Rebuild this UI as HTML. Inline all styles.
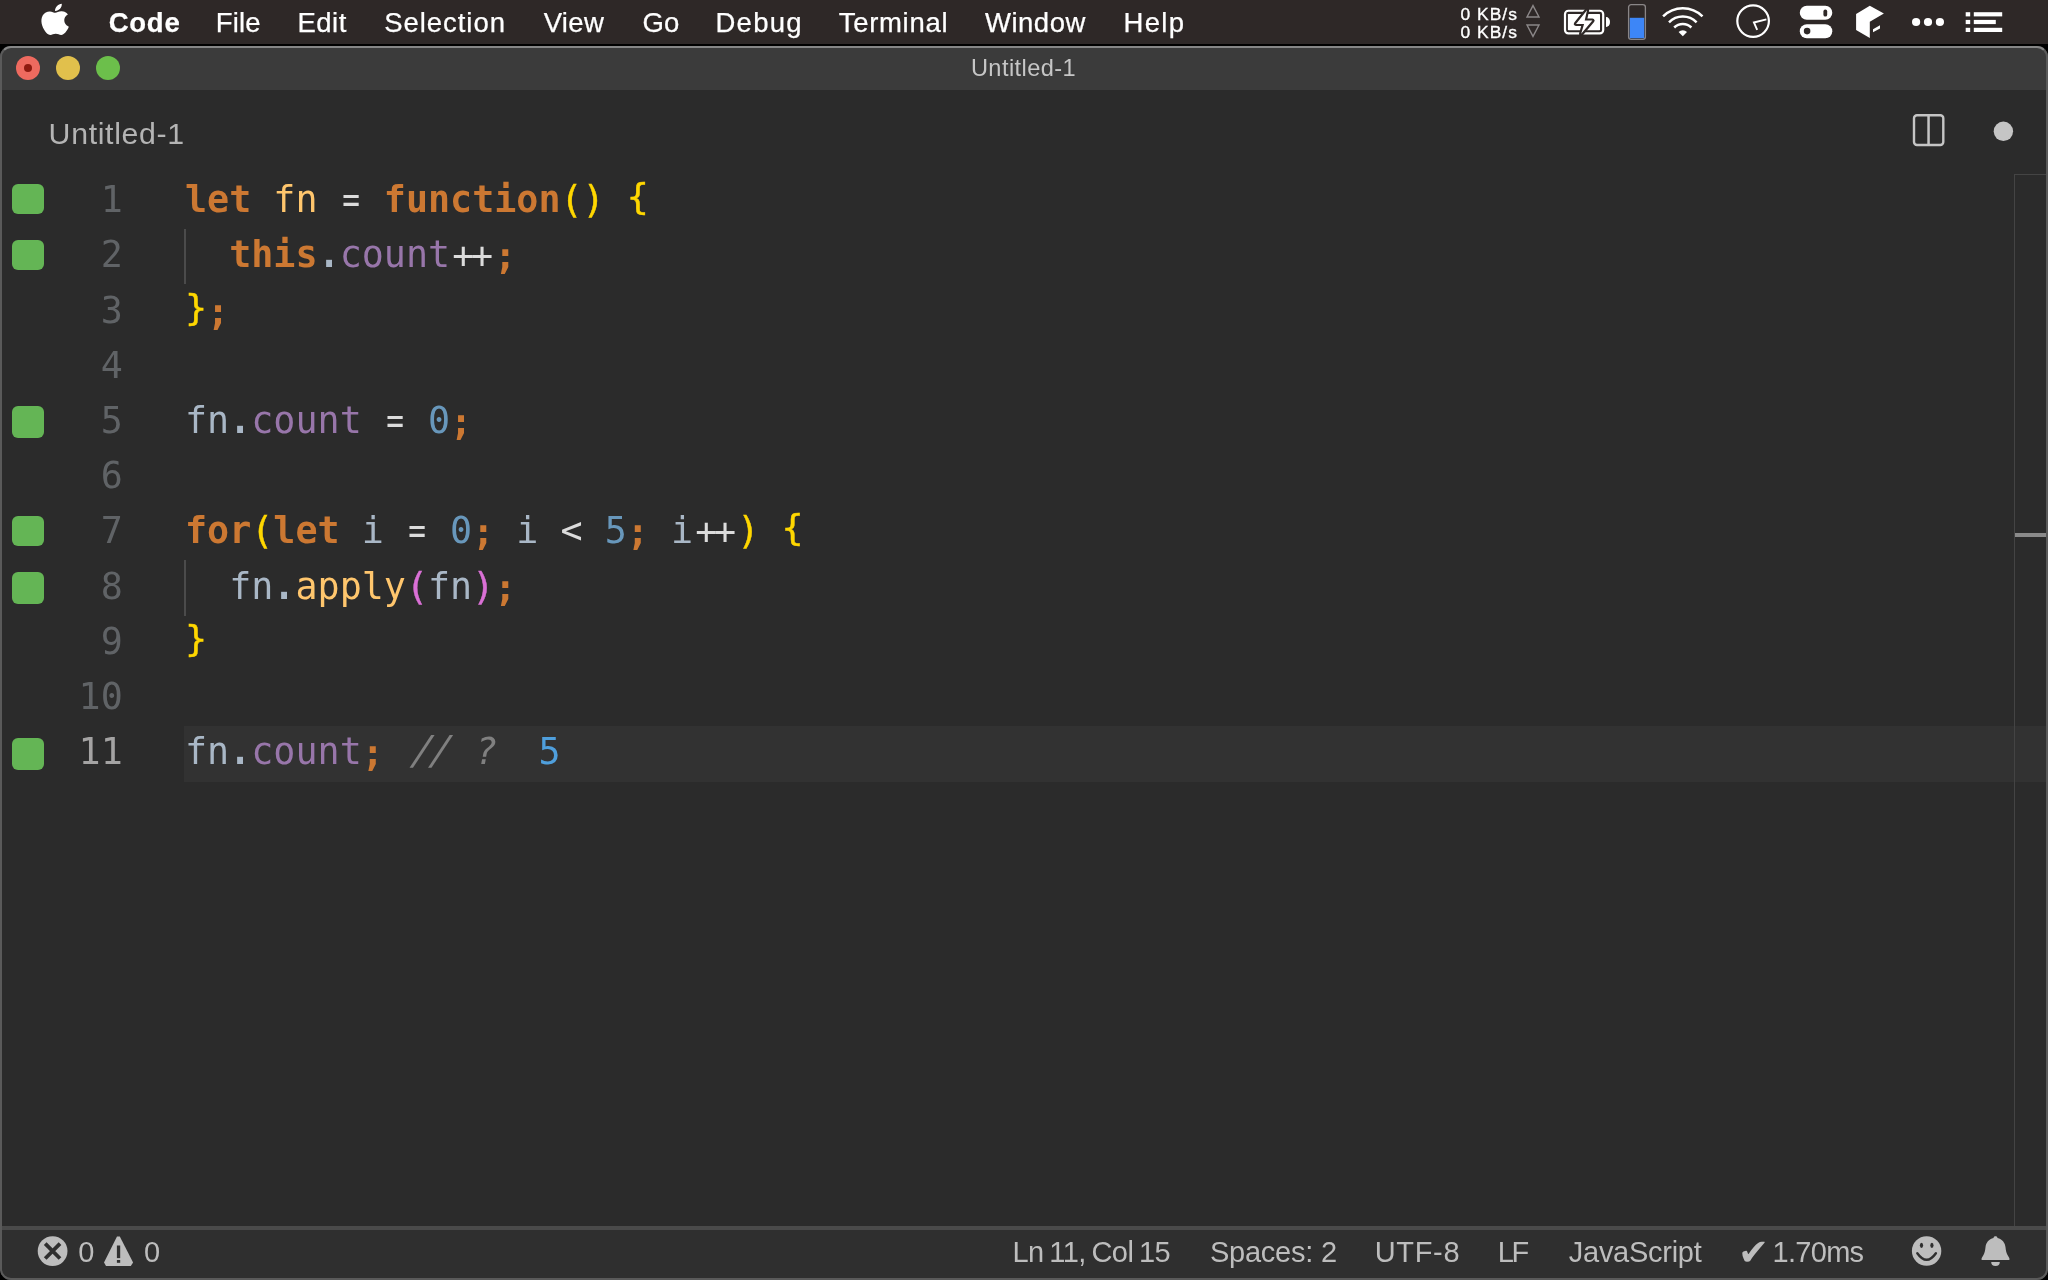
<!DOCTYPE html>
<html lang="en">
<head>
<meta charset="utf-8">
<title>Untitled-1</title>
<style>
*{box-sizing:border-box;margin:0;padding:0}
html,body{width:2048px;height:1280px;overflow:hidden;background:#000}
body{will-change:transform;position:relative;font-family:"Liberation Sans",sans-serif;color:#fff;-webkit-font-smoothing:antialiased}
.abs{position:absolute}
/* ---------- macOS menu bar ---------- */
#menubar{position:absolute;left:0;top:0;width:2048px;height:44px;background:#2e2827}
#menubar .mi{-webkit-text-stroke:0.25px #fff;position:absolute;top:1px;height:44px;line-height:44px;font-size:27.5px;color:#fff;white-space:nowrap}
#menubar .mi.b{font-weight:bold}
#menubar .net{position:absolute;left:1460.6px;height:23px;line-height:23px;font-size:17.4px;color:#fff;white-space:nowrap;letter-spacing:1.0px;-webkit-text-stroke:0.35px #fff}
/* ---------- window ---------- */
#win{position:absolute;left:0;top:46px;width:2048px;height:1234px;background:#2b2b2b;border-radius:11px 11px 11px 11px;overflow:hidden}
#winborder{position:absolute;left:0;top:46px;width:2048px;height:1234px;border-radius:11px;border-left:2px solid #5a5a5a;border-right:2px solid #5a5a5a;border-bottom:2px solid #5a5a5a;border-top:2px solid #868686;pointer-events:none}
#titlebar{position:absolute;left:0;top:0;width:2048px;height:44px;background:#3b3b3b}
#titlebar .t{position:absolute;left:0;width:2047px;top:0;height:44px;line-height:45px;text-align:center;font-size:23.6px;letter-spacing:0.42px;color:#c6c6c6}
.tl{position:absolute;top:10px;width:24px;height:24px;border-radius:50%}
/* ---------- tab row ---------- */
#tabs{position:absolute;left:0;top:44px;width:2048px;height:84px;background:#2b2b2b}
#tabs .lbl{position:absolute;left:48.6px;top:0;height:84px;line-height:87px;font-size:30.3px;letter-spacing:0.66px;color:#b4b4b4;white-space:nowrap}
/* ---------- editor ---------- */
#ed{position:absolute;left:0;top:128px;width:2048px;height:1052px;background:#2b2b2b}
.ln{position:absolute;left:0;width:122.8px;margin-top:-1.9px;text-align:right;height:55.2px;line-height:55.2px;font-family:"DejaVu Sans Mono","Liberation Mono",monospace;font-size:36.7px;color:#606366;white-space:pre}
.ln.act{color:#a4a3a3}
.cl{position:absolute;left:185px;margin-top:-1.9px;height:55.2px;line-height:55.2px;font-family:"DejaVu Sans Mono","Liberation Mono",monospace;font-size:36.7px;color:#a9b7c6;white-space:pre}
.sq{position:absolute;left:12px;width:32px;height:31px;border-radius:6px;background:#64b555}
.k{color:#cc7832;font-weight:bold}
.f{color:#ffc66d}
.o{color:#dcdcdc}
.pp{position:relative;top:1px;color:#dcdcdc;letter-spacing:-3.5px;margin-left:2.25px;margin-right:4.75px}
.eq{color:#dcdcdc;display:inline-block;transform:scaleX(0.8)}
.y{color:#ffd700;-webkit-text-stroke:0.45px #ffd700}
.m{color:#da70d6;-webkit-text-stroke:0.45px #da70d6}
.br{display:inline-block;transform-origin:50% 69%;transform:translateY(-2.6px) scaleY(0.95)}
.d{display:inline-block;transform-origin:50% 69.5%;transform:scale(1.3)}
.p{color:#9876aa}
.n{color:#6897bb}
.s{color:#cc7832;font-weight:bold;display:inline-block;transform-origin:50% 69%;transform:translateY(2.3px) scale(1,1.03)}
.c{color:#808080;font-style:italic}
.q{color:#4f9fdc}
.sl{letter-spacing:-3.7px;margin-left:2.7px;margin-right:4.7px;display:inline-block;transform-origin:50% 69%;transform:translateX(1.5px) skewX(-11deg) scaleY(1.08)}
.qm{position:relative;left:3px}
.ig{position:absolute;left:184px;width:2px;height:55.2px;background:#4b4b4b}
#curline{position:absolute;left:184px;top:552px;width:1864px;height:55.6px;background:#323232}
#ruler{position:absolute;left:2014px;top:0;width:34px;height:1052px;border-left:1px solid #444;border-top:1px solid #444}
#rulermark{position:absolute;left:2015px;top:359px;width:33px;height:4px;background:#8a8a8a}
/* ---------- status bar ---------- */
#status{position:absolute;left:0;top:1180px;width:2048px;height:54px;background:#2f2f2f;border-top:4px solid #4a4a4a}
#status .si{position:absolute;top:0;height:46px;line-height:44px;font-size:29px;color:#bdbdbd;white-space:nowrap}
</style>
</head>
<body>
<div id="menubar">
  <svg class="abs" style="left:0;top:0" width="2048" height="46" viewBox="0 0 2048 46">
    <!-- apple logo -->
    <g transform="translate(38.3,3.8) scale(1.40,1.30)" fill="#fff"><path d="M12.152 6.896c-.948 0-2.415-1.078-3.96-1.04-2.04.027-3.91 1.183-4.961 3.014-2.117 3.675-.546 9.103 1.519 12.09 1.013 1.454 2.208 3.09 3.792 3.039 1.52-.065 2.09-.987 3.935-.987 1.831 0 2.35.987 3.96.948 1.637-.026 2.676-1.48 3.676-2.948 1.156-1.688 1.636-3.325 1.662-3.415-.039-.013-3.182-1.221-3.22-4.857-.026-3.04 2.48-4.494 2.597-4.559-1.429-2.09-3.623-2.324-4.39-2.376-2-.156-3.675 1.09-4.61 1.09zM15.53 3.83c.843-1.012 1.4-2.427 1.245-3.83-1.207.052-2.662.805-3.532 1.818-.78.896-1.454 2.338-1.273 3.714 1.338.104 2.715-.688 3.559-1.701"/></g>
    <!-- net arrows -->
    <path d="M1533 5.6 L1539.0 17 L1527.0 17 Z" fill="none" stroke="#8b8788" stroke-width="1.4" stroke-linejoin="miter"/>
    <path d="M1533 36.4 L1539.0 25 L1527.0 25 Z" fill="none" stroke="#8b8788" stroke-width="1.4" stroke-linejoin="miter"/>
    <!-- battery -->
    <rect x="1565" y="10.75" width="38.2" height="22.7" rx="3.4" fill="none" stroke="#fff" stroke-width="2.2"/>
    <rect x="1567.9" y="13.9" width="32.1" height="16.3" rx="0.6" fill="#fff"/>
    <path d="M1606 17.1 h0.2 a3.8 4.9 0 0 1 0 9.8 h-0.2 Z" fill="#fff"/>
    <path d="M1587.0 10.2 L1576.0 23.9 L1584.1 23.9 L1581.2 33.8 L1592.4 20.6 L1584.7 20.6 Z" fill="#fff" stroke="#2e2827" stroke-width="4.4" paint-order="stroke fill" stroke-linejoin="round"/>
    <!-- blue meter -->
    <rect x="1628.6" y="4.7" width="16.8" height="34.6" rx="2.6" fill="none" stroke="#8a8687" stroke-width="1.3"/>
    <rect x="1629.8" y="17.8" width="14.4" height="20.4" fill="#3d86f7"/>
    <!-- wifi -->
    <g fill="none" stroke="#fff" stroke-width="2.5" stroke-linecap="butt">
      <path d="M1663.1 16.4 A27.9 27.9 0 0 1 1702.5 16.4"/>
      <path d="M1669.0 22.3 A19.5 19.5 0 0 1 1696.6 22.3"/>
      <path d="M1674.2 27.5 A12.2 12.2 0 0 1 1691.4 27.5"/>
    </g>
    <path d="M1682.8 36.3 L1678.6 32.1 A5.9 5.9 0 0 1 1687 32.1 Z" fill="#fff"/>
    <!-- clock -->
    <circle cx="1753.1" cy="21.1" r="15.8" fill="none" stroke="#fff" stroke-width="2.2"/>
    <path d="M1766.4 19.4 L1753.9 22.5 L1757.2 29.9" fill="none" stroke="#fff" stroke-width="1.9" stroke-linejoin="miter"/>
    <!-- toggles -->
    <rect x="1799.8" y="5.8" width="32.5" height="14" rx="7" fill="#fff"/>
    <rect x="1799.8" y="24.2" width="32.5" height="14" rx="7" fill="#fff"/>
    <rect x="1823.4" y="9.6" width="3.8" height="7" rx="1.9" fill="#2e2827"/>
    <circle cx="1807.1" cy="31.1" r="3.3" fill="#2e2827"/>
    <!-- cube -->
    <path d="M1869.8 5.8 L1883.9 13.4 L1869.8 21.7 L1869.8 38.1 L1856.1 30.1 L1856.1 14.1 Z" fill="#fff"/>
    <path d="M1873 29.2 L1880 25.2 L1880 28.4 L1873 32.2 Z" fill="#fff"/>
    <!-- dots -->
    <circle cx="1916.1" cy="22" r="4.1" fill="#fff"/><circle cx="1928" cy="22" r="4.1" fill="#fff"/><circle cx="1939.9" cy="22" r="4.1" fill="#fff"/>
    <!-- list -->
    <g fill="#fff">
      <rect x="1965.7" y="12.2" width="4.5" height="4.2"/><rect x="1973.8" y="12.2" width="28.4" height="4.2"/>
      <rect x="1965.7" y="19.9" width="4.5" height="4.2"/><rect x="1973.8" y="19.9" width="22" height="4.2"/>
      <rect x="1965.7" y="27.8" width="4.5" height="4.2"/><rect x="1973.8" y="27.8" width="28.4" height="4.2"/>
    </g>
  </svg>
  <div class="mi b" style="left:108.7px;letter-spacing:0.75px">Code</div>
  <div class="mi" style="left:215.8px;letter-spacing:0.15px">File</div>
  <div class="mi" style="left:297.4px;letter-spacing:0.5px">Edit</div>
  <div class="mi" style="left:384.3px;letter-spacing:0.94px">Selection</div>
  <div class="mi" style="left:543.7px;letter-spacing:0.33px">View</div>
  <div class="mi" style="left:642.4px;letter-spacing:0.3px">Go</div>
  <div class="mi" style="left:715.5px;letter-spacing:1.25px">Debug</div>
  <div class="mi" style="left:838.7px;letter-spacing:0.7px">Terminal</div>
  <div class="mi" style="left:985px;letter-spacing:0.5px">Window</div>
  <div class="mi" style="left:1123.6px;letter-spacing:1.3px">Help</div>
  <div class="net" style="top:3.0px">0 KB/s</div>
  <div class="net" style="top:20.6px">0 KB/s</div>
</div>
<div id="win">
  <div id="titlebar">
    <div class="tl" style="left:16px;background:#ee6a5f"></div>
    <div class="tl" style="left:56px;background:#e1c04c"></div>
    <div class="tl" style="left:96px;background:#6cbf4b"></div>
    <div class="abs" style="left:24px;top:18px;width:8px;height:8px;border-radius:50%;background:#8e1a10"></div>
    <div class="t">Untitled-1</div>
  </div>
  <div id="tabs">
    <div class="lbl">Untitled-1</div>
  </div>
  <div id="ed">
    <div id="curline"></div>
    <div id="ruler"></div>
    <div id="rulermark"></div>
    <div class="sq" style="top:9.7px;height:30.6px"></div>
    <div class="sq" style="top:65.75px;height:30.65px"></div>
    <div class="sq" style="top:231.9px;height:32.2px"></div>
    <div class="sq" style="top:341.75px;height:30.5px"></div>
    <div class="sq" style="top:398.0px;height:31.9px"></div>
    <div class="sq" style="top:563.9px;height:32.2px"></div>
    <div class="ln" style="top:0.0px">1</div>
    <div class="cl" style="top:0.0px"><span class="k">let</span> <span class="f">fn</span> <span class="eq">=</span> <span class="k">function</span><span class="y">()</span> <span class="y br">{</span></div>
    <div class="ln" style="top:55.2px">2</div>
    <div class="ig" style="top:55.2px"></div>
    <div class="cl" style="top:55.2px">  <span class="k">this</span><span class="d">.</span><span class="p">count</span><span class="pp">++</span><span class="s">;</span></div>
    <div class="ln" style="top:110.4px">3</div>
    <div class="cl" style="top:110.4px"><span class="y br">}</span><span class="s">;</span></div>
    <div class="ln" style="top:165.6px">4</div>
    <div class="ln" style="top:220.8px">5</div>
    <div class="cl" style="top:220.8px">fn<span class="d">.</span><span class="p">count</span> <span class="eq">=</span> <span class="n">0</span><span class="s">;</span></div>
    <div class="ln" style="top:276.0px">6</div>
    <div class="ln" style="top:331.2px">7</div>
    <div class="cl" style="top:331.2px"><span class="k">for</span><span class="y">(</span><span class="k">let</span> i <span class="eq">=</span> <span class="n">0</span><span class="s">;</span> i <span class="o">&lt;</span> <span class="n">5</span><span class="s">;</span> i<span class="pp">++</span><span class="y">)</span> <span class="y br">{</span></div>
    <div class="ln" style="top:386.4px">8</div>
    <div class="ig" style="top:386.4px"></div>
    <div class="cl" style="top:386.4px">  fn<span class="d">.</span><span class="f">apply</span><span class="m">(</span>fn<span class="m">)</span><span class="s">;</span></div>
    <div class="ln" style="top:441.6px">9</div>
    <div class="cl" style="top:441.6px"><span class="y br">}</span></div>
    <div class="ln" style="top:496.8px">10</div>
    <div class="ln act" style="top:552.0px">11</div>
    <div class="cl" style="top:552.0px">fn<span class="d">.</span><span class="p">count</span><span class="s">;</span> <span class="c"><span class="sl">//</span> <span class="qm">?</span></span>  <span class="q">5</span></div>
  </div>
  <div id="status">
    <div class="si" id="s1" style="left:78.3px">0</div>
    <div class="si" id="s2" style="left:143.9px">0</div>
    <div class="si" id="s3" style="left:1012.4px;letter-spacing:-0.6px;word-spacing:-1.6px">Ln 11, Col 15</div>
    <div class="si" id="s4" style="left:1209.9px;letter-spacing:-0.22px">Spaces: 2</div>
    <div class="si" id="s5" style="left:1374.7px;letter-spacing:0.68px">UTF-8</div>
    <div class="si" id="s6" style="left:1497.7px;letter-spacing:-2.3px">LF</div>
    <div class="si" id="s7" style="left:1568.8px;letter-spacing:-0.27px">JavaScript</div>
    <div class="si" id="s8" style="left:1738px;font-size:36.5px;line-height:45px">✔</div>
    <div class="si" id="s9" style="left:1772.5px;letter-spacing:-0.7px">1.70ms</div>
  </div>
</div>
<svg class="abs" style="left:0;top:0" width="2048" height="1280" viewBox="0 0 2048 1280">
  <!-- split editor icon -->
  <rect x="1914" y="115.3" width="29.3" height="29.7" rx="3" fill="none" stroke="#c5c5c5" stroke-width="2.4"/>
  <rect x="1927.3" y="115.3" width="2.5" height="29.7" fill="#c5c5c5"/>
  <!-- dirty dot -->
  <circle cx="2003.4" cy="131.3" r="9.7" fill="#c5c5c5"/>
  <!-- status: error -->
  <circle cx="52.6" cy="1251.1" r="14.9" fill="#bdbdbd"/>
  <path d="M45.2 1243.7 L60 1258.5 M60 1243.7 L45.2 1258.5" stroke="#2f2f2f" stroke-width="3.8" fill="none"/>
  <!-- status: warning -->
  <path d="M117 1236.4 L119.8 1236.4 L133.1 1262.4 L130.8 1266 L106 1266 L104 1262.4 Z" fill="#bdbdbd"/>
  <rect x="116.9" y="1245.5" width="3.3" height="12.6" fill="#2f2f2f"/>
  <rect x="116.9" y="1260" width="3.3" height="2.8" fill="#2f2f2f"/>
  <!-- smiley -->
  <circle cx="1926.6" cy="1251" r="14.7" fill="#bdbdbd"/>
  <ellipse cx="1921.5" cy="1245.3" rx="1.6" ry="2.6" fill="#2f2f2f"/>
  <ellipse cx="1931.9" cy="1245.3" rx="1.6" ry="2.6" fill="#2f2f2f"/>
  <path d="M1917.3 1253.2 Q1926.6 1266.4 1935.9 1253.2" fill="none" stroke="#2f2f2f" stroke-width="2.4" stroke-linecap="round"/>
  <!-- bell -->
  <path d="M1995.5 1236.2 c1.1 0 1.9 0.7 2.0 1.7 c4.6 1.2 7.6 4.6 8.0 9.4 c0.3 3.4 0.9 5.6 1.9 7.4 c0.6 1.2 1.4 2.3 2.0 3.6 l0 1.8 l-27.8 0 l0 -1.8 c0.6 -1.3 1.4 -2.4 2.0 -3.6 c1.0 -1.8 1.6 -4.0 1.9 -7.4 c0.4 -4.8 3.4 -8.2 8.0 -9.4 c0.1 -1.0 0.9 -1.7 2.0 -1.7 Z" fill="#bdbdbd"/>
  <path d="M1991.2 1262 L1999.8 1262 A4.3 3.9 0 0 1 1991.2 1262 Z" fill="#bdbdbd"/>
</svg>
<div id="winborder"></div>
</body>
</html>
